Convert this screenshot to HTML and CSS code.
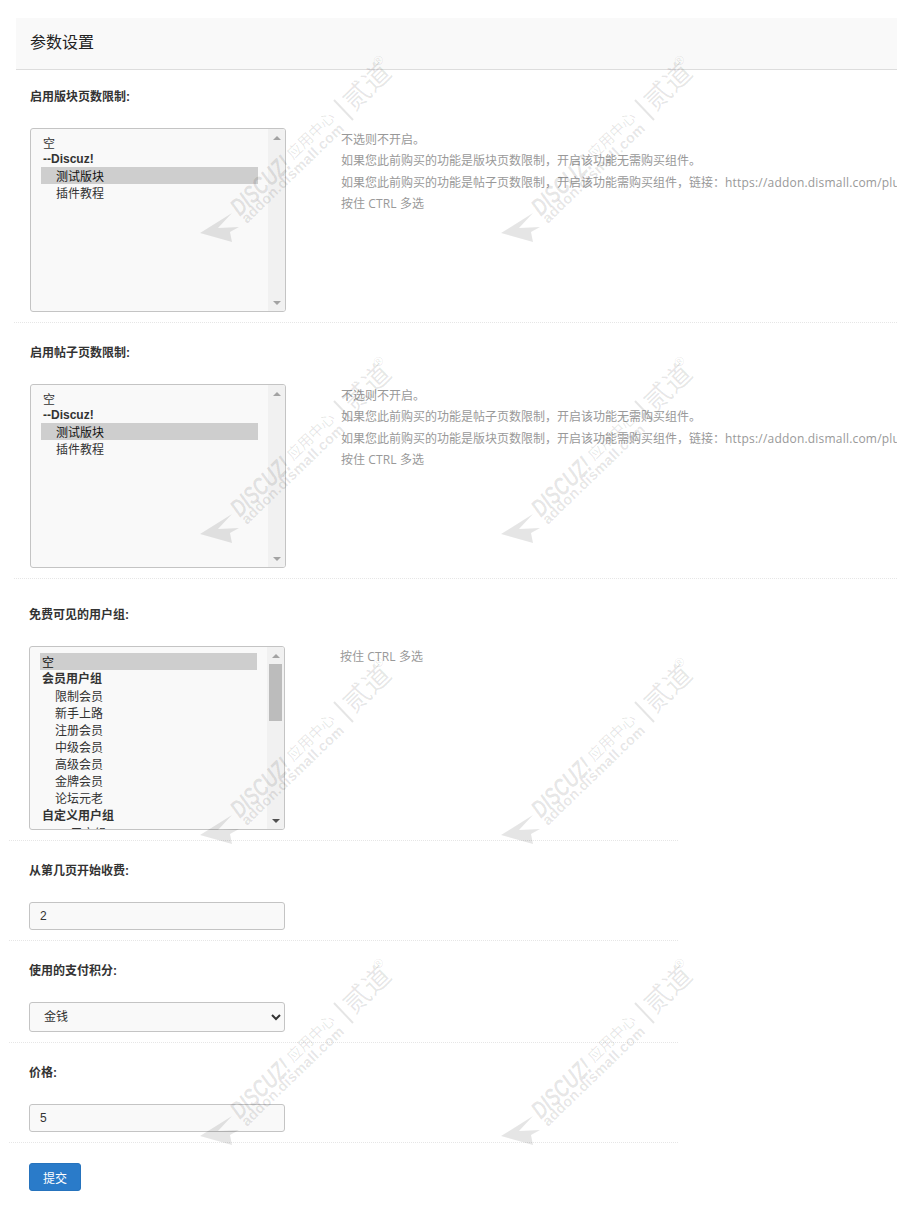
FILE: index.html
```html
<!DOCTYPE html>
<html lang="zh-CN">
<head>
    <meta charset="UTF-8">
    <meta name="viewport" content="width=device-width, initial-scale=1.0">
    <title>参数设置</title>
    <link rel="stylesheet" href="styles.css">
</head>
<body>
    <div class="panel-head">参数设置</div>

    <form class="settings">
        <div class="group group-forum">
            <div class="row row-first">
                <label class="row-label">启用版块页数限制:</label>
                <div class="row-body">
                    <div class="field listbox">
                        <select class="list list-forum" multiple>
                            <option>空</option>
                            <optgroup label="--Discuz!">
                                <option selected>测试版块</option>
                                <option>插件教程</option>
                            </optgroup>
                        </select>
                        <div class="scrollbar">
                            <span class="arrow arrow-up"></span>
                            <span class="arrow arrow-down"></span>
                        </div>
                    </div>
                    <div class="tip">
                        不选则不开启。<br>
                        如果您此前购买的功能是版块页数限制，开启该功能无需购买组件。<br>
                        如果您此前购买的功能是帖子页数限制，开启该功能需购买组件，链接：<span class="tip-en">https://addon.dismall.com/plugins/threadpage.html</span><br>
                        按住 <span class="tip-en">CTRL</span> 多选
                    </div>
                </div>
            </div>
            <div class="row">
                <label class="row-label">启用帖子页数限制:</label>
                <div class="row-body">
                    <div class="field listbox">
                        <select class="list list-forum" multiple>
                            <option>空</option>
                            <optgroup label="--Discuz!">
                                <option selected>测试版块</option>
                                <option>插件教程</option>
                            </optgroup>
                        </select>
                        <div class="scrollbar">
                            <span class="arrow arrow-up"></span>
                            <span class="arrow arrow-down"></span>
                        </div>
                    </div>
                    <div class="tip">
                        不选则不开启。<br>
                        如果您此前购买的功能是帖子页数限制，开启该功能无需购买组件。<br>
                        如果您此前购买的功能是版块页数限制，开启该功能需购买组件，链接：<span class="tip-en">https://addon.dismall.com/plugins/forumpage.html</span><br>
                        按住 <span class="tip-en">CTRL</span> 多选
                    </div>
                </div>
            </div>
        </div>

        <div class="group group-basic">
            <div class="row">
                <label class="row-label">免费可见的用户组:</label>
                <div class="row-body">
                    <div class="field listbox">
                        <select class="list list-users" multiple>
                            <option selected>空</option>
                            <optgroup label="会员用户组">
                                <option>限制会员</option>
                                <option>新手上路</option>
                                <option>注册会员</option>
                                <option>中级会员</option>
                                <option>高级会员</option>
                                <option>金牌会员</option>
                                <option>论坛元老</option>
                            </optgroup>
                            <optgroup label="自定义用户组">
                                <option>vip用户组</option>
                            </optgroup>
                            <optgroup label="系统用户组">
                                <option>管理员</option>
                                <option>超级版主</option>
                                <option>版主</option>
                            </optgroup>
                        </select>
                        <div class="scrollbar">
                            <span class="arrow arrow-up"></span>
                            <span class="thumb"></span>
                            <span class="arrow arrow-down arrow-active"></span>
                        </div>
                    </div>
                    <div class="tip tip-single">按住 <span class="tip-en">CTRL</span> 多选</div>
                </div>
            </div>
            <div class="row">
                <label class="row-label">从第几页开始收费:</label>
                <input class="field text-input" type="text" value="2">
            </div>
            <div class="row">
                <label class="row-label">使用的支付积分:</label>
                <select class="field pick">
                    <option>金钱</option>
                    <option>威望</option>
                    <option>贡献</option>
                </select>
            </div>
            <div class="row">
                <label class="row-label">价格:</label>
                <input class="field text-input" type="text" value="5">
            </div>
        </div>

        <button class="submit" type="submit">提交</button>
    </form>

    <!-- 水印 -->
    <svg class="watermark" width="897" height="1210" aria-hidden="true">
        <defs>
            <g id="mark">
                <path d="M0 183 L32 163 L18 178 L39 177 L30 182 L32 192 Z"/>
                <text class="mark-brand" transform="translate(40 167) rotate(-44)" textLength="73" lengthAdjust="spacingAndGlyphs">DISCUZ!</text>
                <text class="mark-cn" transform="translate(93 110) rotate(-44)">应用中心</text>
                <path class="mark-line" d="M134 50 L153 70"/>
                <text class="mark-name" transform="translate(154 62) rotate(-44)">贰道</text>
                <text class="mark-reg" transform="translate(178 17) rotate(-44)">®</text>
                <text class="mark-url" transform="translate(47 174) rotate(-44)">addon.dismall.com</text>
            </g>
        </defs>
        <use href="#mark" x="200" y="50"/>
        <use href="#mark" x="501" y="50"/>
        <use href="#mark" x="200" y="351"/>
        <use href="#mark" x="501" y="351"/>
        <use href="#mark" x="200" y="652"/>
        <use href="#mark" x="501" y="652"/>
        <use href="#mark" x="200" y="953"/>
        <use href="#mark" x="501" y="953"/>
    </svg>
</body>
</html>
```

FILE: styles.css
```css
html, body {
    margin: 0;
    padding: 0;
    height: 1210px;
    overflow: hidden;
    background-color: #fff;
}
body {
    position: relative;
    font-family: "Liberation Sans", "Noto Sans CJK SC", sans-serif;
    font-size: 12px;
    color: #333;
}
.panel-head {
    margin: 18px 0 0 16px;
    height: 51px;
    padding-left: 14px;
    line-height: 50px;
    font-size: 16px;
    color: #222;
    background-color: #f9f9f9;
    border-bottom: 1px solid #ddd;
}
.group-forum {
    margin-left: 14px;
}
.group-forum .row {
    padding-left: 16px;
}
.group-basic {
    margin: 6px 0 0 9px;
    width: 669px;
}
.group-basic .row {
    padding-left: 20px;
}
.row {
    padding-top: 21px;
    padding-bottom: 10px;
    border-bottom: 1px dotted #e6e6e6;
}
.row-first {
    padding-top: 18px;
}
.row-label {
    display: block;
    height: 17px;
    line-height: 19px;
    margin-bottom: 23px;
    font-weight: bold;
}
.row-body {
    display: flex;
    gap: 55px;
}
.field {
    display: block;
    box-sizing: border-box;
    width: 256px;
    flex-shrink: 0;
    margin: 0;
    font-family: inherit;
    font-size: 12px;
    color: #333;
    background-color: #f9f9f9;
    border: 1px solid #c4c4c4;
    border-radius: 3px;
    outline: none;
}
.listbox {
    display: flex;
    height: 184px;
    overflow: hidden;
}
.list {
    flex: 1;
    min-width: 0;
    padding: 6px 10px 0;
    font-family: inherit;
    font-size: 12px;
    color: #333;
    background-color: transparent;
    border: 0;
    outline: none;
    overflow: hidden;
}
.list-forum {
    padding-top: 5px;
}
.list-forum optgroup {
    padding-top: 1px;
}
.list-users optgroup:first-of-type {
    margin-top: -1px;
}
.list option {
    height: 17px;
    min-height: 17px;
    line-height: 17px;
    padding: 0 2px;
}
.list optgroup {
    font-weight: bold;
}
.list optgroup option {
    padding-left: 15px;
    font-weight: normal;
}
.scrollbar {
    display: flex;
    flex-direction: column;
    width: 17px;
    flex-shrink: 0;
    background-color: #f1f1f1;
}
.arrow {
    display: flex;
    align-items: center;
    justify-content: center;
    height: 17px;
    flex-shrink: 0;
}
.arrow::before {
    content: "";
    border-left: 4px solid transparent;
    border-right: 4px solid transparent;
}
.arrow-up::before {
    border-bottom: 4px solid #a3a3a3;
}
.arrow-down {
    margin-top: auto;
}
.arrow-down::before {
    border-top: 4px solid #a3a3a3;
}
.arrow-active::before {
    border-top-color: #505050;
}
.thumb {
    display: block;
    height: 57px;
    margin: 0 2px;
    background-color: #bcbcbc;
}
.tip {
    padding-top: 0.5px;
    line-height: 21.5px;
    color: #999;
    white-space: nowrap;
    font-family: "Open Sans", "Noto Sans CJK SC", sans-serif;
}
.tip-single {
    padding-top: 0;
}
.tip-en {
    letter-spacing: 0.2px;
}
.text-input {
    height: 28px;
    padding: 0 10px;
}
.pick {
    height: 30px;
    padding-left: 10px;
}
.submit {
    display: block;
    margin: 20px 0 0 29px;
    width: 52px;
    height: 28px;
    padding: 0;
    font-family: inherit;
    font-size: 12px;
    color: #fff;
    background-color: #2a7bc9;
    border: 1px solid #2673bd;
    border-radius: 3px;
}
.watermark {
    position: absolute;
    top: 0;
    left: 0;
    pointer-events: none;
    fill: rgba(0, 0, 0, 0.1);
}
.mark-brand {
    font: italic bold 25px "Liberation Sans", sans-serif;
}
.mark-cn {
    font: 15px "Noto Sans CJK SC", sans-serif;
}
.mark-name {
    font: 27px "Noto Sans CJK SC", sans-serif;
}
.mark-reg {
    font: 13px "Liberation Sans", sans-serif;
}
.mark-url {
    font: bold 14.500px "Liberation Sans", sans-serif;
    letter-spacing: 0.3px;
}
.mark-line {
    fill: none;
    stroke: rgba(0, 0, 0, 0.1);
    stroke-width: 2;
}
```
